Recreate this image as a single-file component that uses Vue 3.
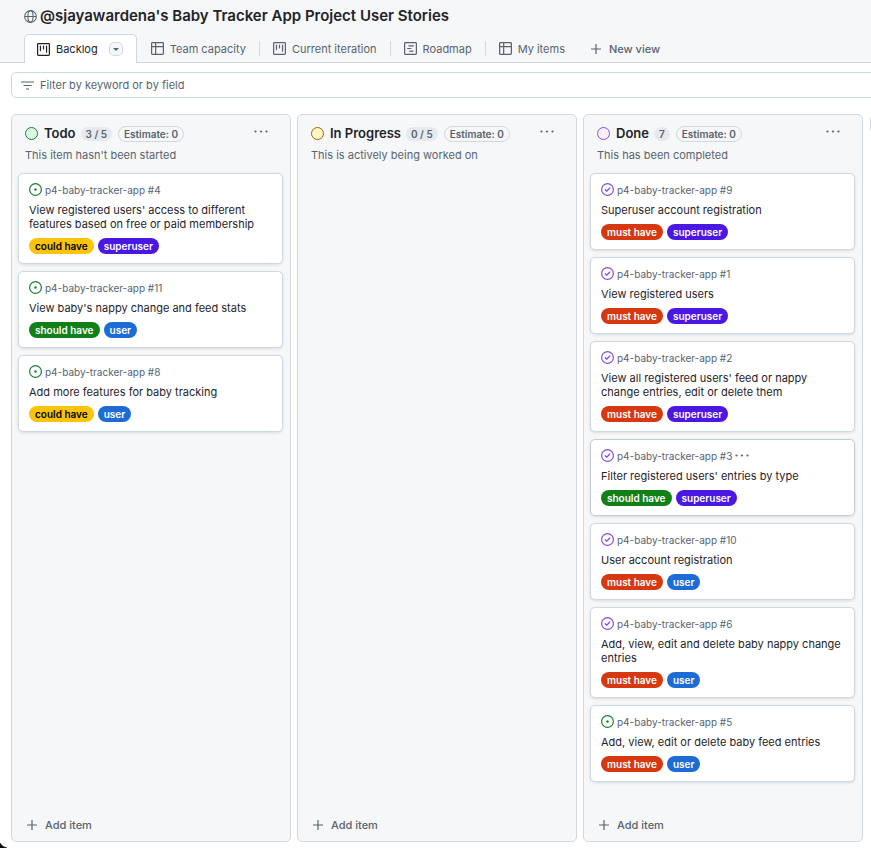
<script setup>
import { ref } from 'vue'

const icons = {
  board:
    'M1.75 0h12.5C15.216 0 16 .784 16 1.75v12.5A1.75 1.75 0 0 1 14.25 16H1.75A1.75 1.75 0 0 1 0 14.25V1.75C0 .784.784 0 1.75 0ZM1.5 1.75v12.5c0 .138.112.25.25.25h12.5a.25.25 0 0 0 .25-.25V1.75a.25.25 0 0 0-.25-.25H1.75a.25.25 0 0 0-.25.25ZM11.75 3a.75.75 0 0 1 .75.75v7.5a.75.75 0 0 1-1.5 0v-7.5a.75.75 0 0 1 .75-.75Zm-8.25.75a.75.75 0 0 1 1.5 0v5.5a.75.75 0 0 1-1.5 0ZM8 3a.75.75 0 0 1 .75.75v3.5a.75.75 0 0 1-1.5 0v-3.5A.75.75 0 0 1 8 3Z',
  table:
    'M0 1.75C0 .784.784 0 1.75 0h12.5C15.216 0 16 .784 16 1.75v12.5A1.75 1.75 0 0 1 14.25 16H1.75A1.75 1.75 0 0 1 0 14.25ZM6.5 6.5v8h7.75a.25.25 0 0 0 .25-.25V6.5Zm8-1.5V1.75a.25.25 0 0 0-.25-.25H6.5V5Zm-13 1.5v7.75c0 .138.112.25.25.25H5v-8ZM5 5V1.5H1.75a.25.25 0 0 0-.25.25V5Z',
  roadmap:
    'M1.75 0h12.5C15.216 0 16 .784 16 1.75v12.5A1.75 1.75 0 0 1 14.25 16H1.75A1.75 1.75 0 0 1 0 14.25V1.75C0 .784.784 0 1.75 0ZM1.5 1.75v12.5c0 .138.112.25.25.25h12.5a.25.25 0 0 0 .25-.25V1.75a.25.25 0 0 0-.25-.25H1.75a.25.25 0 0 0-.25.25ZM6 4h5.75a.75.75 0 0 1 0 1.5H6A.75.75 0 0 1 6 4ZM4.5 7.25h4a.75.75 0 0 1 0 1.5h-4a.75.75 0 0 1 0-1.5ZM7 10.5h4a.75.75 0 0 1 0 1.5H7a.75.75 0 0 1 0-1.5Z',
}

const tabs = [
  { name: 'Team capacity', icon: icons.table },
  { name: 'Current iteration', icon: icons.board },
  { name: 'Roadmap', icon: icons.roadmap },
  { name: 'My items', icon: icons.table },
]

const repo = 'p4-baby-tracker-app'
const filter = ref('')

const columns = [
  {
    name: 'Todo',
    tone: 'green',
    count: '3 / 5',
    note: "This item hasn't been started",
    cards: [
      { id: 4, open: true, title: "View registered users' access to different features based on free or paid membership", labels: ['could have', 'superuser'] },
      { id: 11, open: true, title: "View baby's nappy change and feed stats", labels: ['should have', 'user'] },
      { id: 8, open: true, title: 'Add more features for baby tracking', labels: ['could have', 'user'] },
    ],
  },
  {
    name: 'In Progress',
    tone: 'yellow',
    count: '0 / 5',
    note: 'This is actively being worked on',
    cards: [],
  },
  {
    name: 'Done',
    tone: 'purple',
    count: '7',
    note: 'This has been completed',
    cards: [
      { id: 9, title: 'Superuser account registration', labels: ['must have', 'superuser'] },
      { id: 1, title: 'View registered users', labels: ['must have', 'superuser'] },
      { id: 2, title: "View all registered users' feed or nappy change entries, edit or delete them", labels: ['must have', 'superuser'] },
      { id: 3, hovered: true, title: "Filter registered users' entries by type", labels: ['should have', 'superuser'] },
      { id: 10, title: 'User account registration', labels: ['must have', 'user'] },
      { id: 6, title: 'Add, view, edit and delete baby nappy change entries', labels: ['must have', 'user'] },
      { id: 5, open: true, title: 'Add, view, edit or delete baby feed entries', labels: ['must have', 'user'] },
    ],
  },
]

const labelClass = (label) => label.replace(' ', '-')
</script>

<template>
  <div class="page">
    <header class="header">
      <h1 class="title">
        <svg class="icon" viewBox="0 0 16 16" fill="none" stroke="#59636e" stroke-width="1.3" aria-hidden="true">
          <circle cx="8" cy="8" r="7.2" />
          <ellipse cx="8" cy="8" rx="3.2" ry="7.2" />
          <path d="M1 8h14" />
        </svg>
        <span>@sjayawardena's Baby Tracker App Project User Stories</span>
      </h1>
      <nav class="tabs">
        <div class="tab active">
          <a class="tab-link" href="#" aria-current="page">
            <svg class="icon" viewBox="0 0 16 16" aria-hidden="true"><path :d="icons.board" /></svg>
            Backlog
          </a>
          <button class="tab-menu" type="button" aria-label="View options">
            <svg viewBox="0 0 8 4" aria-hidden="true"><path d="M0 0h8L4 4z" /></svg>
          </button>
        </div>
        <a v-for="tab in tabs" :key="tab.name" class="tab" href="#">
          <svg class="icon" viewBox="0 0 16 16" aria-hidden="true"><path :d="tab.icon" /></svg>
          {{ tab.name }}
        </a>
        <button class="new-view" type="button">
          <svg class="plus" viewBox="0 0 10 10" aria-hidden="true"><path d="M5 0v10M0 5h10" /></svg>
          New view
        </button>
      </nav>
    </header>

    <label class="filter">
      <svg class="filter-icon" viewBox="0 0 13 9" aria-hidden="true"><path d="M0 1h13M2.5 4.5h8M5 8h3" /></svg>
      <input v-model="filter" type="text" placeholder="Filter by keyword or by field" aria-label="Filter by keyword or by field" />
    </label>

    <main class="board">
      <section v-for="column in columns" :key="column.name" class="column">
        <header class="column-head">
          <div class="column-line">
            <span class="dot" :class="column.tone"></span>
            <h2>{{ column.name }}</h2>
            <span class="count">{{ column.count }}</span>
            <span class="estimate">Estimate: 0</span>
            <button class="more" type="button" aria-label="Column actions">
              <svg viewBox="0 0 14 3" aria-hidden="true"><circle cx="1.5" cy="1.5" r="1.1" /><circle cx="7" cy="1.5" r="1.1" /><circle cx="12.5" cy="1.5" r="1.1" /></svg>
            </button>
          </div>
          <p>{{ column.note }}</p>
        </header>
        <div class="cards">
          <article v-for="card in column.cards" :key="card.id" class="card" :class="{ hovered: card.hovered }">
            <div class="ref">
              <svg v-if="card.open" class="icon" viewBox="0 0 16 16" fill="none" stroke="#1a7f37" stroke-width="1.5" aria-hidden="true">
                <circle cx="8" cy="8" r="7.25" />
                <circle cx="8" cy="8" r="1.5" fill="#1a7f37" stroke="none" />
              </svg>
              <svg v-else class="icon" viewBox="0 0 16 16" fill="none" stroke="#8250df" stroke-width="1.5" aria-hidden="true">
                <circle cx="8" cy="8" r="7.25" />
                <path d="M5.2 8.3l1.8 1.8 3.8-3.9" stroke-linecap="round" stroke-linejoin="round" />
              </svg>
              <span>{{ repo }} #{{ card.id }}</span>
              <button v-if="card.hovered" class="card-more" type="button" aria-label="Item actions">
                <svg viewBox="0 0 14 3" aria-hidden="true"><circle cx="1.5" cy="1.5" r="1.1" /><circle cx="7" cy="1.5" r="1.1" /><circle cx="12.5" cy="1.5" r="1.1" /></svg>
              </button>
            </div>
            <h3>{{ card.title }}</h3>
            <div class="labels">
              <span v-for="label in card.labels" :key="label" class="label" :class="labelClass(label)">{{ label }}</span>
            </div>
          </article>
        </div>
        <button class="add" type="button">
          <svg class="plus" viewBox="0 0 10 10" aria-hidden="true"><path d="M5 0v10M0 5h10" /></svg>
          Add item
        </button>
      </section>
      <button class="add-column" type="button" aria-label="Add column"></button>
    </main>
  </div>
</template>

<style>
body {
  background: #fff;
  overflow-x: hidden;
}
</style>

<style scoped>
* {
  box-sizing: border-box;
}

.page {
  position: relative;
  display: flex;
  flex-direction: column;
  min-height: 100vh;
  overflow: hidden;
  color: #1f2328;
  font: 11px/14px Inter, "Liberation Sans", sans-serif;
}

.page::after {
  content: "";
  position: absolute;
  left: 0;
  bottom: 0;
  width: 7px;
  height: 5px;
  background: radial-gradient(circle at 8px -4px, transparent 8px, #111 9px);
}

h1,
h2,
h3,
p {
  margin: 0;
}

button {
  padding: 0;
  border: 0;
  background: none;
  color: inherit;
  font: inherit;
}

a {
  color: inherit;
  text-decoration: none;
}

svg {
  display: block;
  flex: none;
}

.icon {
  width: 13px;
  height: 13px;
}

.header {
  padding: 6px 24px 0;
  border-bottom: 1px solid #d1d9e0;
  background: #f5f7f9;
}

.title {
  display: flex;
  align-items: center;
  gap: 3px;
  font-size: 15px;
  line-height: 20px;
  font-weight: 600;
  white-space: nowrap;
}

.tabs {
  display: flex;
  margin-top: 8px;
  margin-bottom: -1px;
  color: #59636e;
  fill: #59636e;
  white-space: nowrap;
}

.tab {
  position: relative;
  display: flex;
  align-items: center;
  gap: 6px;
  height: 29px;
  padding: 0 13px 0 14px;
}

.tab + .tab + .tab::before {
  content: "";
  position: absolute;
  left: 0;
  top: 7px;
  width: 1px;
  height: 15px;
  background: #d1d9e0;
}

.tab.active {
  gap: 11px;
  padding: 0 13px 0 12px;
  border: 1px solid #d1d9e0;
  border-bottom: 0;
  border-radius: 5px 5px 0 0;
  background: #fff;
  color: #1f2328;
  fill: #1f2328;
}

.tab-link {
  display: flex;
  align-items: center;
  gap: 6px;
}

.tab-menu {
  display: flex;
  align-items: center;
  justify-content: center;
  width: 14px;
  height: 14px;
  border: 1px solid #d1d9e0;
  border-radius: 5px;
  background: #f5f7f9;
  fill: #59636e;
}

.tab-menu svg {
  width: 6px;
  height: 3px;
}

.new-view {
  display: flex;
  align-items: center;
  gap: 8px;
  padding-left: 13px;
  font-weight: 500;
}

.plus {
  width: 10px;
  height: 10px;
  fill: none;
  stroke: #59636e;
  stroke-width: 1.2;
}

.filter {
  display: flex;
  align-items: center;
  gap: 6px;
  height: 26px;
  margin: 9px -8px 16px 11px;
  padding: 0 9px;
  border: 1px solid #d1d9e0;
  border-radius: 5px;
}

.filter-icon {
  width: 13px;
  height: 9px;
  fill: none;
  stroke: #59636e;
  stroke-width: 1.2;
}

.filter input {
  flex: 1;
  min-width: 0;
  padding: 0;
  border: 0;
  outline: 0;
  background: none;
  color: inherit;
  font: inherit;
}

.filter input::placeholder {
  color: #59636e;
  opacity: 1;
}

.board {
  display: flex;
  flex: 1;
  gap: 6px;
  padding: 0 0 6px 11px;
}

.column {
  display: flex;
  flex: none;
  flex-direction: column;
  width: 280px;
  border: 1px solid #d1d9e0;
  border-radius: 5px;
  background: #f5f7f9;
}

.column-head {
  padding: 10px 13px 0;
  color: #59636e;
}

.column-head p {
  margin-top: 6px;
}

.column-line {
  display: flex;
  align-items: center;
  height: 17px;
}

.dot {
  width: 13px;
  height: 13px;
  border: 1px solid;
  border-radius: 50%;
}

.green {
  border-color: #1a7f37;
  background: #dafbe1;
}

.yellow {
  border-color: #9a6700;
  background: #fff8c5;
}

.purple {
  border-color: #8250df;
  background: #fbefff;
}

h2 {
  margin: 0 5px 0 6px;
  color: #1f2328;
  font-size: 13px;
  line-height: 17px;
  font-weight: 600;
}

.count,
.estimate {
  font-size: 10px;
  line-height: 14px;
  font-weight: 600;
  border-radius: 8px;
}

.count {
  padding: 0 5px;
  background: #e6eaef;
}

.estimate {
  margin-left: 6px;
  padding: 0 5px;
  border: 1px solid #d1d9e0;
}

.more {
  margin-left: auto;
  padding: 4px 9px 8px;
  fill: #59636e;
}

.more svg,
.card-more svg {
  width: 14px;
  height: 3px;
}

.cards {
  display: flex;
  flex: 1;
  flex-direction: column;
  gap: 7px;
  padding: 11px 7px 0 6px;
}

.card {
  padding: 9px 10px;
  border: 1px solid #d1d9e0;
  border-radius: 5px;
  background: #fff;
  box-shadow: 0 1px 3px rgba(31, 35, 40, 0.12);
}

.card.hovered {
  border-color: #c4ccd4;
}

.ref {
  display: flex;
  align-items: center;
  gap: 3px;
  height: 13px;
  color: #59636e;
  font-size: 10px;
}

.card-more {
  fill: #59636e;
}

h3 {
  margin: 7px 0;
  font-size: 11px;
  line-height: 14px;
  font-weight: 400;
}

.labels {
  display: flex;
  gap: 4px;
}

.label {
  padding: 0 6px;
  border-radius: 8px;
  color: #fff;
  font-size: 10px;
  line-height: 16px;
  font-weight: 600;
}

.could-have {
  background: #fbc40a;
  color: #000;
}

.should-have {
  background: #118018;
}

.must-have {
  background: #d63810;
}

.superuser {
  background: #4a18e2;
}

.user {
  background: #1d6cd6;
}

.add {
  display: flex;
  align-items: center;
  gap: 8px;
  padding: 9px 15px;
  color: #59636e;
  font-weight: 500;
}

.add-column {
  flex: none;
  width: 20px;
  height: 20px;
  margin-left: 1px;
  border: 1px solid #d1d9e0;
  border-radius: 5px;
  background: #f5f7f9;
}
</style>
